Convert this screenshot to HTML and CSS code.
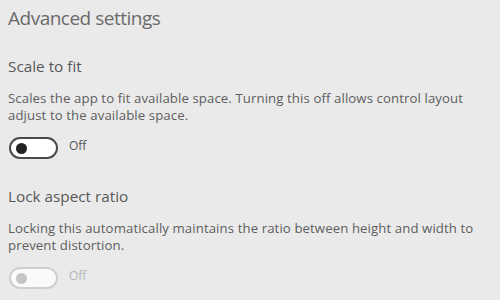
FILE: index.html
```html
<!DOCTYPE html>
<html>
<head>
<meta charset="utf-8">
<link rel="stylesheet" href="styles.css">
</head>
<body>
<div class="panel">
  <h1 class="title">Advanced settings</h1>
  <section class="setting">
    <h2 class="name">Scale to fit</h2>
    <p class="desc">Scales the app to fit available space. Turning this off allows control layout adjust to the available space.</p>
    <div class="toggle-row">
      <span class="toggle"><span class="knob"></span></span>
      <span class="state">Off</span>
    </div>
  </section>
  <section class="setting">
    <h2 class="name">Lock aspect ratio</h2>
    <p class="desc">Locking this automatically maintains the ratio between height and width to prevent distortion.</p>
    <div class="toggle-row disabled">
      <span class="toggle"><span class="knob"></span></span>
      <span class="state">Off</span>
    </div>
  </section>
</div>
</body>
</html>
```
FILE: styles.css
```css
html, body {
  margin: 0;
  padding: 0;
  background: #eaeaea;
}
body {
  width: 500px;
  height: 300px;
  overflow: hidden;
  font-family: "Open Sans", "Noto Sans", sans-serif;
  color: #5a5a5a;
}
.panel {
  padding: 4px 8px 0 8px;
}
.title {
  margin: 0;
  font-size: 19px;
  letter-spacing: -0.5px;
  font-weight: 400;
  line-height: 28px;
  color: #6a6a6a;
}
.setting {
  margin-top: 24px;
}
.setting + .setting {
  margin-top: 27px;
}
.name {
  margin: 0;
  font-size: 15.3px;
  font-weight: 400;
  line-height: 20px;
  color: #585858;
}
.desc {
  margin: 14px 0 0 0;
  font-size: 13.2px;
  letter-spacing: 0.1px;
  line-height: 17px;
  max-width: 474px;
  color: #5e5e5e;
}
.toggle-row {
  display: flex;
  align-items: center;
  gap: 11px;
  margin-top: 13px;
  padding-left: 1px;
}
.toggle {
  box-sizing: border-box;
  width: 49px;
  height: 22px;
  border: 2px solid #4a4a4a;
  border-radius: 11px;
  background: #fff;
  display: flex;
  align-items: center;
  padding-left: 5px;
}
.knob {
  width: 11px;
  height: 11px;
  border-radius: 50%;
  background: #222;
}
.state {
  font-size: 12px;
  color: #555;
  margin-top: -5px;
}
.disabled .toggle {
  border-color: #cfcfcf;
  background: #fafafa;
}
.disabled .knob {
  background: #c6c6c6;
}
.disabled .state {
  color: #b5b5b5;
}
```
